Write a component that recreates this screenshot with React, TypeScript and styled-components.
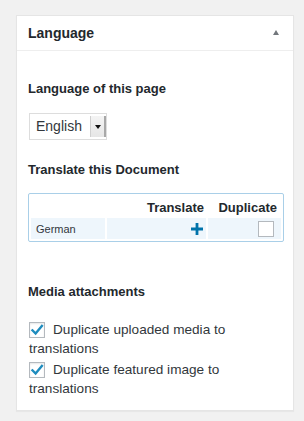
import React from "react";
import styled, { createGlobalStyle } from "styled-components";

const Global = createGlobalStyle`
  html, body { margin: 0; padding: 0; background: #f1f1f1; }
  body { font-family: "Liberation Sans", Arial, sans-serif; color: #444; }
`;

const Page = styled.div`
  padding: 15px 10px 12px 16px;
`;

const Panel = styled.div`
  width: 276px;
  background: #fff;
  border: 1px solid #e5e5e5;
  box-shadow: 0 1px 1px rgba(0, 0, 0, 0.04);
`;

const Header = styled.div`
  height: 34px;
  display: flex;
  align-items: center;
  justify-content: space-between;
  padding: 0 14px 0 11px;
  border-bottom: 1px solid #eee;
`;

const HeaderTitle = styled.h2`
  margin: 0;
  font-size: 14px;
  font-weight: 700;
  color: #23282d;
  line-height: 18px;
`;

const Toggle = styled.span`
  width: 0;
  height: 0;
  border-left: 3.5px solid transparent;
  border-right: 3.5px solid transparent;
  border-bottom: 5px solid #72777c;
  margin-top: -1px;
`;

const Body = styled.div`
  padding: 29px 11px 12px;
`;

const SectionTitle = styled.h3<{ $gap?: number }>`
  margin: ${(p) => p.$gap ?? 0}px 0 0;
  font-size: 13px;
  font-weight: 700;
  color: #23282d;
  line-height: 18px;
`;

const SelectBox = styled.div`
  margin-top: 15px;
  width: 78px;
  height: 27px;
  box-sizing: border-box;
  display: flex;
  border: 1px solid #ddd;
  background: #fff;
  margin-left: 1px;
`;

const SelectText = styled.span`
  flex: 1;
  font-size: 14px;
  line-height: 25px;
  padding-left: 6px;
  color: #32373c;
`;

const SelectArrow = styled.span`
  width: 13px;
  margin: 2px 0;
  background: linear-gradient(#f4f4f4, #e6e6e6);
  border-left: 1px solid #d0d0d0;
  border-right: 2px solid #a8a8a8;
  display: flex;
  align-items: center;
  justify-content: center;
  &::after {
    content: "";
    border-left: 3px solid transparent;
    border-right: 3px solid transparent;
    border-top: 4px solid #111;
  }
`;

const Table = styled.table`
  margin-top: 14px;
  width: 254px;
  box-sizing: border-box;
  border: 1px solid #a9cfe8;
  border-radius: 2px;
  border-spacing: 2px;
  table-layout: fixed;
`;

const Col = styled.col<{ $w: number }>`
  width: ${(p) => p.$w}px;
`;

const Th = styled.th<{ $pr: number }>`
  height: 20px;
  padding: 0 ${(p) => p.$pr}px 0 0;
  text-align: right;
  font-size: 13px;
  font-weight: 700;
  color: #23282d;
  line-height: 16px;
  vertical-align: bottom;
  white-space: nowrap;
`;

const Td = styled.td<{ $align?: string; $pr?: number }>`
  height: 21px;
  background: #eef6fc;
  padding: 0 ${(p) => p.$pr ?? 0}px 0 ${(p) => (p.$align === "right" ? 0 : 5)}px;
  text-align: ${(p) => p.$align ?? "left"};
  font-size: 11px;
  color: #32373c;
  vertical-align: middle;
  line-height: 12px;
`;

const PlusIcon = styled.svg`
  display: inline-block;
  vertical-align: middle;
  margin-top: 1px;
`;

const EmptyBox = styled.span`
  display: inline-block;
  vertical-align: middle;
  width: 16px;
  height: 16px;
  box-sizing: border-box;
  border: 1px solid #b4b9be;
  background: #fff;
  margin-top: 1px;
`;

const Options = styled.div`
  margin-top: 19px;
  display: flex;
  flex-direction: column;
  gap: 2px;
`;

const Option = styled.label`
  display: block;
  font-size: 13.6px;
  line-height: 19px;
  color: #32373c;
  margin-left: 1px;
`;

const Check = styled.span`
  display: inline-flex;
  align-items: center;
  justify-content: center;
  width: 16px;
  height: 16px;
  box-sizing: border-box;
  border: 1px solid #b4b9be;
  background: #fff;
  vertical-align: -3px;
  margin-right: 8px;
  box-shadow: inset 0 1px 2px rgba(0, 0, 0, 0.1);
`;

const CheckMark = () => (
  <svg width="14" height="14" viewBox="0 0 20 20">
    <path d="M3.5 10.5 L8 15 L17 4" fill="none" stroke="#1e8cbe" strokeWidth="3.4" strokeLinecap="square" strokeLinejoin="miter" />
  </svg>
);

export default function App() {
  return (
    <Page>
      <Global />
      <Panel>
        <Header>
          <HeaderTitle>Language</HeaderTitle>
          <Toggle />
        </Header>
        <Body>
          <SectionTitle>Language of this page</SectionTitle>
          <SelectBox>
            <SelectText>English</SelectText>
            <SelectArrow />
          </SelectBox>
          <SectionTitle $gap={21}>Translate this Document</SectionTitle>
          <Table>
            <colgroup>
              <Col $w={74} />
              <Col $w={99} />
              <Col $w={73} />
            </colgroup>
            <thead>
              <tr>
                <Th $pr={0}></Th>
                <Th $pr={2}>Translate</Th>
                <Th $pr={4}>Duplicate</Th>
              </tr>
            </thead>
            <tbody>
              <tr>
                <Td>German</Td>
                <Td $align="right" $pr={3}>
                  <PlusIcon width="12" height="12" viewBox="0 0 12 12">
                    <path d="M6 0 V12 M0 6 H12" stroke="#0073aa" strokeWidth="2.8" />
                  </PlusIcon>
                </Td>
                <Td $align="right" $pr={7}>
                  <EmptyBox />
                </Td>
              </tr>
            </tbody>
          </Table>
          <SectionTitle $gap={41}>Media attachments</SectionTitle>
          <Options>
            <Option>
              <Check><CheckMark /></Check>Duplicate uploaded media to translations
            </Option>
            <Option>
              <Check><CheckMark /></Check>Duplicate featured image to translations
            </Option>
          </Options>
        </Body>
      </Panel>
    </Page>
  );
}
